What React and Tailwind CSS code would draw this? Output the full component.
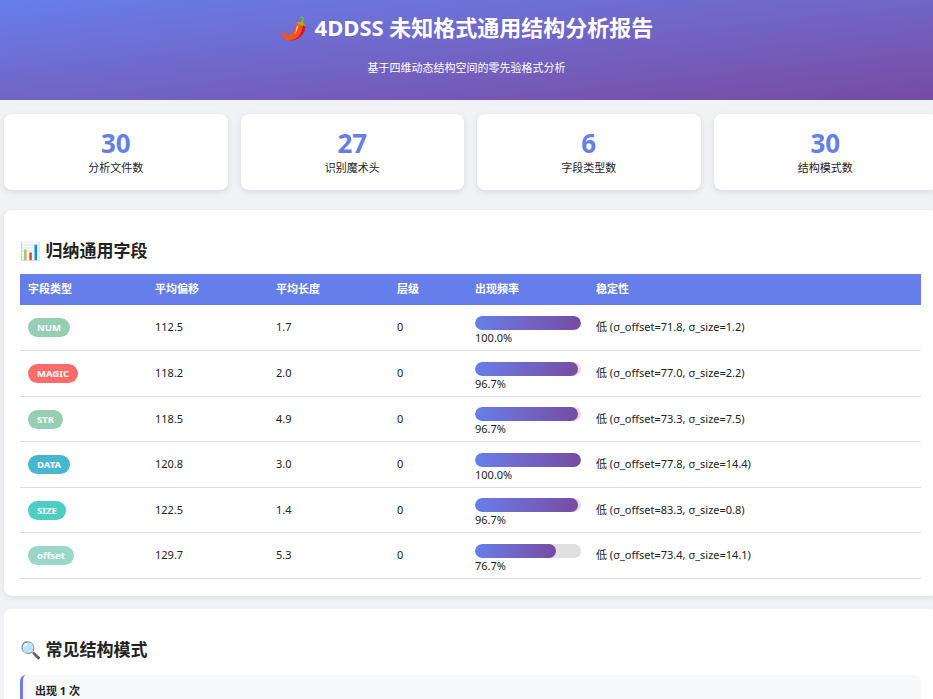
export default function App() {
  const rows = [
    ["NUM", "bg-[#96ceb4]", "112.5", "1.7", 100.0, "100.0%", "低 (σ_offset=71.8, σ_size=1.2)"],
    ["MAGIC", "bg-[#ff6b6b]", "118.2", "2.0", 96.7, "96.7%", "低 (σ_offset=77.0, σ_size=2.2)"],
    ["STR", "bg-[#96ceb4]", "118.5", "4.9", 96.7, "96.7%", "低 (σ_offset=73.3, σ_size=7.5)"],
    ["DATA", "bg-[#45b7d1]", "120.8", "3.0", 100.0, "100.0%", "低 (σ_offset=77.8, σ_size=14.4)"],
    ["SIZE", "bg-[#4ecdc4]", "122.5", "1.4", 96.7, "96.7%", "低 (σ_offset=83.3, σ_size=0.8)"],
    ["offset", "bg-[#98d8c8]", "129.7", "5.3", 76.7, "76.7%", "低 (σ_offset=73.4, σ_size=14.1)"],
  ];
  const stats = [["30", "分析文件数"], ["27", "识别魔术头"], ["6", "字段类型数"], ["30", "结构模式数"]];
  return (
    <div className="h-[699px] overflow-hidden bg-[#f0f2f5] text-[#222]" style={{ fontFamily: '"Noto Sans", "Noto Sans CJK SC", sans-serif' }}>
      <div className="h-[100px] bg-gradient-to-br from-[#667eea] to-[#764ba2] text-white flex flex-col items-center pt-[12px]">
        <h1 className="text-[22px] font-bold leading-[30px] flex items-center gap-2"><span>🌶️</span>4DDSS 未知格式通用结构分析报告</h1>
        <p className="text-[11px] mt-[18px]">基于四维动态结构空间的零先验格式分析</p>
      </div>
      <div className="w-[933px] ml-1">
        <div className="grid grid-cols-4 gap-[13px] mt-[14px]">
          {stats.map(([n, l], i) => (
            <div key={i} className="bg-white rounded-lg shadow-[0_2px_6px_rgba(0,0,0,0.1)] h-[76px] flex flex-col items-center justify-center">
              <div className="text-[26px] font-bold text-[#667eea] leading-[32px]">{n}</div>
              <div className="text-[11px] mt-[1px]">{l}</div>
            </div>
          ))}
        </div>
        <div className="bg-white rounded-lg shadow-[0_2px_6px_rgba(0,0,0,0.08)] mt-[20px] px-4 pt-[28px] pb-[17px]">
          <h2 className="text-[17px] font-bold leading-[26px] mb-[10px]">📊 归纳通用字段</h2>
          <table className="w-[901px] text-[11px] border-collapse table-fixed">
            <thead>
              <tr className="bg-[#667eea] text-white h-[31px] text-left">
                {[["字段类型", 127], ["平均偏移", 121], ["平均长度", 121], ["层级", 78], ["出现频率", 121], ["稳定性", 333]].map(([h, w]) => (
                  <th key={h} className="px-2 font-bold" style={{ width: w }}>{h}</th>
                ))}
              </tr>
            </thead>
            <tbody>
              {rows.map((r) => (
                <tr key={r[0]} className="border-b border-[#ddd] h-[45.5px]">
                  <td className="px-2"><span className={`${r[1]} text-white text-[9.5px] font-bold rounded-full px-[9px] py-[3px]`}>{r[0]}</span></td>
                  <td className="px-2">{r[2]}</td>
                  <td className="px-2">{r[3]}</td>
                  <td className="px-2">0</td>
                  <td className="px-2 pt-[7px]">
                    <div className="w-[106px] h-[14px] rounded-full bg-[#e0e0e0] overflow-hidden">
                      <div className="h-full rounded-full bg-gradient-to-r from-[#667eea] to-[#764ba2]" style={{ width: `${r[4]}%` }} />
                    </div>
                    <div className="leading-[16px]">{r[5]}</div>
                  </td>
                  <td className="px-2">{r[6]}</td>
                </tr>
              ))}
            </tbody>
          </table>
        </div>
        <div className="bg-white rounded-lg mt-[13px] px-4 pt-[28px] pb-4">
          <h2 className="text-[17px] font-bold leading-[26px] mb-[12px]">🔍 常见结构模式</h2>
          <div className="bg-[#f8f9fa] border-l-[3px] border-[#667eea] rounded-md px-3 py-2 text-[11px] font-bold">出现 1 次</div>
        </div>
      </div>
    </div>
  );
}
